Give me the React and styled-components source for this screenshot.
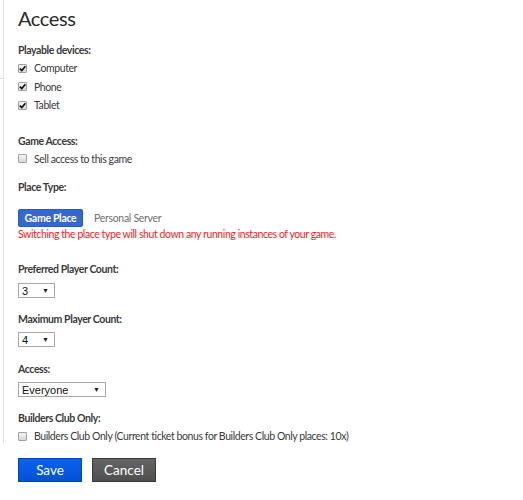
import styled, { createGlobalStyle } from 'styled-components';

const GlobalStyle = createGlobalStyle`
  html, body {
    margin: 0;
    padding: 0;
    background: #fff;
  }
  body {
    font-family: Lato, "Open Sans", sans-serif;
    color: #343434;
  }
`;

const Page = styled.div`
  display: flex;
  min-height: 500px;
`;

const SideRule = styled.div`
  width: 3px;
  height: 443px;
  border-right: 1px solid #e3e3e3;
  position: relative;
  &::after {
    content: '';
    position: absolute;
    top: 78px;
    left: 0;
    width: 3px;
    border-top: 1px solid #dcdcdc;
  }
`;

const Content = styled.div`
  padding: 4px 0 0 14px;
  display: flex;
  flex-direction: column;
`;

const Title = styled.h1`
  margin: 0;
  font-size: 20px;
  font-weight: 400;
  letter-spacing: -0.4px;
  line-height: 28px;
  color: #2a2a2a;
`;

const Section = styled.div`
  display: flex;
  flex-direction: column;
  align-items: flex-start;
  margin-top: ${(p) => p.$top || 0}px;
`;

const Label = styled.div`
  font-size: 10.5px;
  font-weight: 700;
  letter-spacing: -0.4px;
  line-height: 14px;
  color: #3a3a3a;
  margin-bottom: ${(p) => p.$gap || 2}px;
`;

const CheckRow = styled.label`
  display: flex;
  align-items: center;
  height: 18.5px;
  font-size: 10.5px;
  letter-spacing: -0.42px;
  color: #3a3a3a;
  gap: 7px;
`;

const Box = styled.span`
  width: 7px;
  height: 7px;
  border: 1px solid #a0a0a0;
  border-radius: 1px;
  background: linear-gradient(#f4f4f4, #d8d8d8);
  display: flex;
  align-items: center;
  justify-content: center;
`;

const Check = ({ checked }) => (
  <Box>
    {checked && (
      <svg width="7" height="7" viewBox="0 0 7 7">
        <path d="M0.8 3.6 L2.8 5.6 L6.4 1.2" fill="none" stroke="#111" strokeWidth="1.6" />
      </svg>
    )}
  </Box>
);

const TypeRow = styled.div`
  display: flex;
  align-items: center;
  gap: 11px;
`;

const TypeButton = styled.div`
  width: 65px;
  height: 18px;
  box-sizing: border-box;
  display: flex;
  align-items: center;
  justify-content: center;
  background: #3568cf;
  border: 1px solid #2b5bbd;
  border-radius: 2px;
  color: #fff;
  font-size: 10.5px;
  letter-spacing: -0.3px;
  font-weight: 700;
`;

const TypeOption = styled.div`
  font-size: 10.5px;
  letter-spacing: -0.3px;
  color: #707070;
`;

const Warning = styled.div`
  font-size: 10.5px;
  letter-spacing: -0.42px;
  color: #f01c28;
  line-height: 14px;
`;

const Select = styled.div`
  width: ${(p) => p.$width}px;
  height: 15px;
  box-sizing: border-box;
  border: 1px solid #a9a9a9;
  background: #fff;
  display: flex;
  align-items: center;
  justify-content: space-between;
  padding: 0 5px 0 3px;
  font-family: "Liberation Sans", Arial, sans-serif;
  font-size: 11px;
  color: #111;
  &::after {
    content: '▼';
    font-size: 7px;
    color: #222;
  }
`;

const Buttons = styled.div`
  display: flex;
  gap: 10px;
  margin-top: 12px;
`;

const Button = styled.div`
  width: 64px;
  height: 24px;
  box-sizing: border-box;
  display: flex;
  align-items: center;
  justify-content: center;
  font-size: 13.5px;
  color: #fff;
  background: ${(p) => (p.$primary ? 'linear-gradient(#0a63ee, #0250d6)' : 'linear-gradient(#646464, #4f4f4f)')};
  border: 1px solid ${(p) => (p.$primary ? '#0447b8' : '#3a3a3a')};
`;

export default function App() {
  return (
    <>
      <GlobalStyle />
      <Page>
        <SideRule />
        <Content>
          <Title>Access</Title>
          <Section $top={11}>
            <Label>Playable devices:</Label>
            <CheckRow><Check checked />Computer</CheckRow>
            <CheckRow><Check checked />Phone</CheckRow>
            <CheckRow><Check checked />Tablet</CheckRow>
          </Section>
          <Section $top={19}>
            <Label>Game Access:</Label>
            <CheckRow><Check />Sell access to this game</CheckRow>
          </Section>
          <Section $top={12}>
            <Label $gap={15}>Place Type:</Label>
            <TypeRow>
              <TypeButton>Game Place</TypeButton>
              <TypeOption>Personal Server</TypeOption>
            </TypeRow>
            <Warning>Switching the place type will shut down any running instances of your game.</Warning>
          </Section>
          <Section $top={21}>
            <Label $gap={7}>Preferred Player Count:</Label>
            <Select $width={37}>3</Select>
          </Section>
          <Section $top={14}>
            <Label $gap={6}>Maximum Player Count:</Label>
            <Select $width={37}>4</Select>
          </Section>
          <Section $top={15}>
            <Label $gap={6}>Access:</Label>
            <Select $width={88}>Everyone</Select>
          </Section>
          <Section $top={14}>
            <Label>Builders Club Only:</Label>
            <CheckRow><Check />Builders Club Only (Current ticket bonus for Builders Club Only places: 10x)</CheckRow>
          </Section>
          <Buttons>
            <Button $primary>Save</Button>
            <Button>Cancel</Button>
          </Buttons>
        </Content>
      </Page>
    </>
  );
}
